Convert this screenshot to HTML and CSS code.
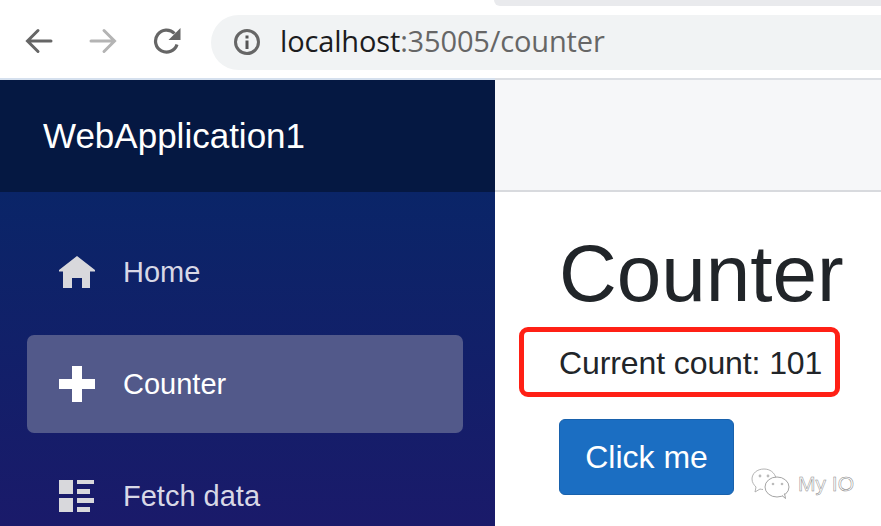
FILE: index.html
```html
<!DOCTYPE html>
<html lang="en">
<head>
<meta charset="utf-8">
<title>Counter</title>
<link rel="stylesheet" href="styles.css">
</head>
<body>
<div class="page">
  <div class="tab-edge"></div>
  <header class="toolbar">
    <svg class="tool-icon" viewBox="0 0 28 28"><path d="M26 14H3M13 3.500 2.500 14 13 24.500" fill="none" stroke="#666" stroke-width="3" stroke-linecap="round"/></svg>
    <svg class="tool-icon" viewBox="0 0 28 28"><path d="M2 14h23M15 3.500 25.500 14 15 24.500" fill="none" stroke="#b4b4b4" stroke-width="3" stroke-linecap="round"/></svg>
    <svg class="tool-icon" viewBox="0 0 28 28"><path d="M24 17.500A11 11 0 1 1 21.500 6.500" fill="none" stroke="#666" stroke-width="3.200"/><path d="M27.500 1v12H15.500z" fill="#666"/></svg>
    <div class="address">
      <svg class="info" viewBox="0 0 28 28"><circle cx="14" cy="14" r="11.500" fill="none" stroke="#666" stroke-width="3"/><path d="M12.500 12.500h3V21h-3zM12.500 7.500h3v3h-3z" fill="#555"/></svg>
      <span class="url"><span class="host">localhost</span><span class="rest">:35005/counter</span></span>
    </div>
  </header>
  <div class="app">
    <aside class="sidebar">
      <div class="brand">WebApplication1</div>
      <nav class="nav">
        <a class="nav-item">
          <svg class="nav-icon" viewBox="0 0 36 32"><path d="M18 0 36 14v1.500H31V32H23V22H13V32H4V15.500H0V14z" fill="#d8d8dc"/></svg>
          <span>Home</span>
        </a>
        <a class="nav-item active">
          <svg class="nav-icon" viewBox="0 0 36 36"><path d="M13 0h10v13h13v10H23v13H13V23H0V13h13z" fill="#fff"/></svg>
          <span>Counter</span>
        </a>
        <a class="nav-item">
          <svg class="nav-icon" viewBox="0 0 36 32"><path d="M0 0h14v14H0zM0 18h14v14H0zM18 0h17v4H18zM18 9h13v5H18zM18 18h17v5H18zM18 27h13v5H18z" fill="#d8d8dc"/></svg>
          <span>Fetch data</span>
        </a>
      </nav>
    </aside>
    <main class="main">
      <div class="topbar"></div>
      <section class="content">
        <h1 class="title">Counter</h1>
        <p class="count">Current count: 101</p>
        <button class="btn">Click me</button>
      </section>
    </main>
  </div>
  <div class="highlight"></div>
  <div class="watermark">
    <svg class="wechat" viewBox="0 0 40 32"><path d="M13 1C6 1 1 5.500 1 11c0 3.500 2 6 4 8l-1 5 5-3c1 .3 2 .5 3 .5M25 10C23.500 4.500 19 1 13 1" fill="none" stroke="#aaa" stroke-width=".9"/><ellipse cx="26" cy="19" rx="12" ry="10" fill="#fff" stroke="#999" stroke-width=".9"/><path d="M31 27.500l3.500 3-1-5" fill="#fff" stroke="#999" stroke-width=".9"/><circle cx="9" cy="8" r="1.400" fill="#bbb"/><circle cx="17" cy="8" r="1.400" fill="#bbb"/><circle cx="22" cy="16" r="1.300" fill="#bbb"/><circle cx="31" cy="16" r="1.300" fill="#bbb"/></svg>
    <span class="mark-text">My IO</span>
  </div>
</div>
</body>
</html>
```
FILE: styles.css
```css
* { box-sizing: border-box; }
html, body { margin: 0; padding: 0; }
body { background: #fff; font-family: "Liberation Sans", Arial, sans-serif; }
.page { position: relative; width: 881px; height: 526px; overflow: hidden; }

.tab-edge { position: absolute; left: 494px; top: 0; width: 387px; height: 6px; background: #e9eaed; border-bottom-left-radius: 8px; }

.toolbar { display: flex; align-items: center; height: 80px; padding: 6px 0 0 25px; background: #fff; border-bottom: 2px solid #dcdfe4; border-image: linear-gradient(90deg, #d5e0ee 495px, #dcdfe4 495px) 1; }
.tool-icon { width: 28px; height: 28px; margin: 0 36px 2px 0; flex: none; }
.tool-icon:nth-child(3) { margin-right: 30px; }
.address { display: flex; align-items: center; flex: 1; height: 55px; padding-left: 22px; background: #f1f3f4; border-radius: 28px 0 0 28px; font-family: "Open Sans", sans-serif; font-size: 29px; letter-spacing: -.15px; }
.info { width: 28px; height: 28px; margin-right: 19px; flex: none; }
.url { margin-bottom: 4px; }
.host { color: #1c1c1e; }
.rest { color: #666; }

.app { display: flex; height: 446px; }
.sidebar { width: 495px; flex: none; background: linear-gradient(180deg, #0a2568 112px, #1a1a6a 100%); }
.brand { display: flex; align-items: center; height: 112px; padding-left: 43px; background: #051842; color: #fff; font-size: 35px; }
.nav { display: flex; flex-direction: column; gap: 14px; padding: 31px 32px 0 27px; }
.nav-item { display: flex; align-items: center; height: 98px; padding-left: 32px; border-radius: 7px; color: #d8d8e6; font-size: 29px; }
.nav-item.active { background: #52598a; color: #fff; }
.nav-icon { width: 36px; height: 36px; margin-right: 28px; flex: none; }

.main { flex: 1; display: flex; flex-direction: column; background: #fff; }
.topbar { height: 112px; background: #f6f7f9; border-bottom: 2px solid #d8dade; }
.content { padding: 33px 0 0 64px; }
.title { margin: 0; color: #212529; font-size: 80px; font-weight: 400; line-height: 97px; }
.count { margin: 23px 0 0; color: #212529; font-size: 32px; letter-spacing: -.1px; line-height: 36px; white-space: nowrap; }
.btn { display: block; width: 175px; height: 76px; margin-top: 38px; padding: 0; background: #1b6ec2; border: 1px solid #1861ac; border-radius: 6px; color: #fff; font-family: inherit; font-size: 32px; }

.highlight { position: absolute; left: 519px; top: 327px; width: 321px; height: 70px; border: 5px solid #ff2015; border-radius: 9px; }

.watermark { position: absolute; left: 751px; top: 468px; display: flex; align-items: center; gap: 7px; }
.wechat { width: 40px; height: 32px; }
.mark-text { color: #fff; font-size: 21px; opacity: .99; -webkit-text-stroke: .5px #888; }
```
